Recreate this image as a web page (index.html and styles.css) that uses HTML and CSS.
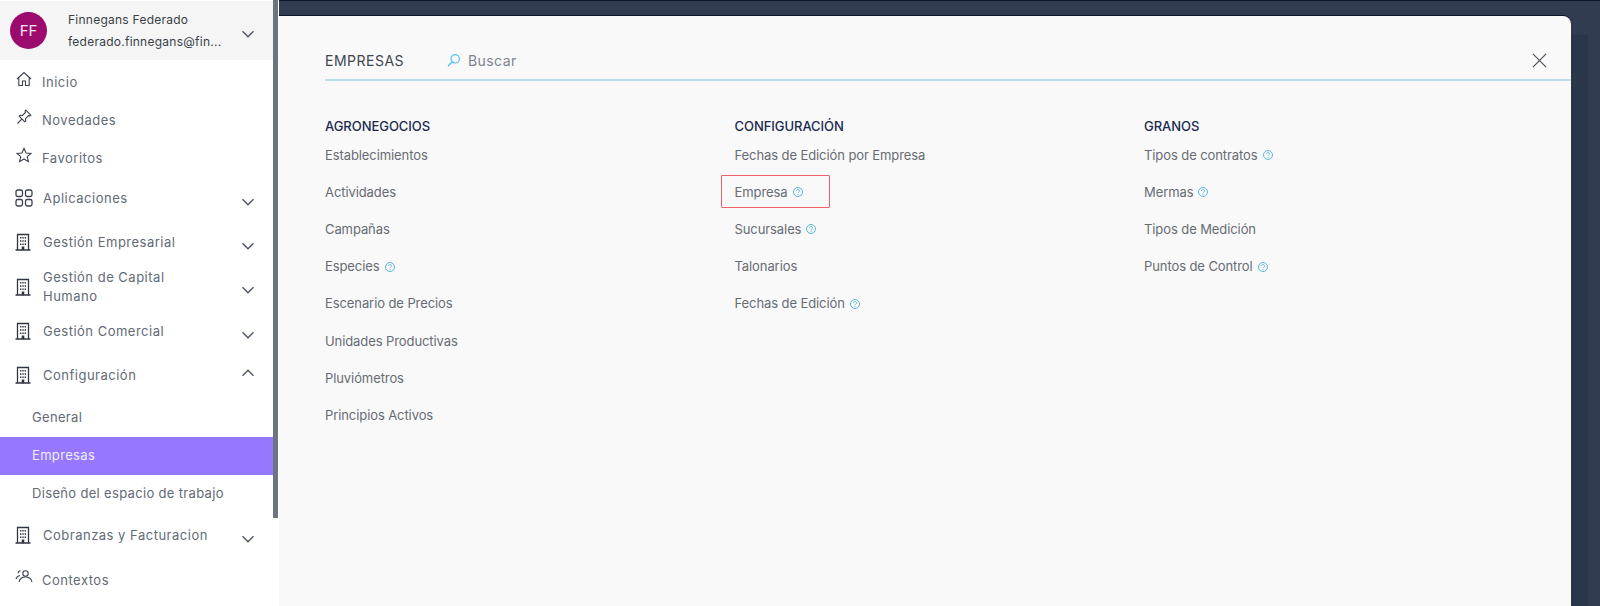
FILE: index.html
```html
<!DOCTYPE html>
<html lang="es">
<head>
<meta charset="utf-8">
<title>Empresas</title>
<link rel="stylesheet" href="styles.css">
</head>
<body>
<svg class="defs" width="0" height="0" aria-hidden="true">
  <symbol id="chev" viewBox="0 0 16 16"><path d="M2.5 5.2 8 10.8l5.5-5.6" fill="none" stroke="currentColor" stroke-width="1.3"/></symbol>
  <symbol id="building" viewBox="0 0 16 18"><path d="M2.500 17V1.500h11V17M.5 17h15" fill="none" stroke="currentColor" stroke-width="1.300"/><path d="M5 4h1.400v1.600H5zM7.300 4h1.400v1.600H7.300zM9.600 4H11v1.600H9.600zM5 7.200h1.400v1.600H5zM7.300 7.200h1.400v1.600H7.300zM9.600 7.200H11v1.600H9.600zM5 10.400h1.400V12H5zM7.300 10.400h1.400V12H7.300zM9.600 10.400H11V12H9.600zM6.700 13.500h2.600V17H6.700z" fill="currentColor"/></symbol>
  <symbol id="help" viewBox="0 0 12 12"><circle cx="6" cy="6" r="4.500" fill="none" stroke="currentColor" stroke-width="1"/><path d="M4.500 4.900A1.500 1.400 0 1 1 6.600 6.200c-.4.300-.6.500-.6 1" fill="none" stroke="currentColor" stroke-width=".9"/><circle cx="6" cy="8.600" r=".55" fill="currentColor"/></symbol>
</svg>

<aside class="sidebar">
  <div class="user">
    <div class="avatar">FF</div>
    <div class="user-text">
      <div class="user-line">Finnegans Federado</div>
      <div class="user-line">federado.finnegans@fin...</div>
    </div>
    <svg class="chev chev-low"><use href="#chev"/></svg>
  </div>
  <nav class="nav">
    <a class="row row-38"><svg class="ico" viewBox="0 0 16 16"><path d="M1 8 8 1.500 15 8M2.800 6.500V14.500h3.700V10h3V14.500h3.700V6.500" fill="none" stroke="currentColor" stroke-width="1.100"/></svg><span class="label">Inicio</span></a>
    <a class="row row-38"><svg class="ico" viewBox="0 0 16 16"><path d="M9.800 1.200 14.800 6.200 13.800 6.900 12.500 6.600 9.500 9.600 9.700 12 8.800 12.800 3.200 7.200 4 6.300 6.400 6.500 9.400 3.500 9.100 2.200zM5.800 10.200 1.500 14.500" fill="none" stroke="currentColor" stroke-width="1.100"/></svg><span class="label">Novedades</span></a>
    <a class="row row-38"><svg class="ico" viewBox="0 0 16 16"><path d="M8 1.300 10 6l5 .4-3.800 3.300 1.200 4.900L8 12l-4.400 2.600 1.200-4.900L1 6.400 6 6z" fill="none" stroke="currentColor" stroke-width="1.100"/></svg><span class="label">Favoritos</span></a>
    <a class="row row-app"><svg class="ico ico-grid" viewBox="0 0 18 18"><rect x="1" y="1" width="6.500" height="6.500" rx="1.800"/><rect x="10.500" y="1" width="6.500" height="6.500" rx="1.800"/><rect x="1" y="10.500" width="6.500" height="6.500" rx="1.800"/><rect x="10.500" y="10.500" width="6.500" height="6.500" rx="1.800"/></svg><span class="label label-app">Aplicaciones</span><svg class="chev chev-low"><use href="#chev"/></svg></a>
    <a class="row row-44"><svg class="bld"><use href="#building"/></svg><span class="label label-b">Gestión Empresarial</span><svg class="chev chev-low"><use href="#chev"/></svg></a>
    <a class="row row-45"><svg class="bld"><use href="#building"/></svg><span class="label label-b label-wrap">Gestión de Capital Humano</span><svg class="chev chev-mid"><use href="#chev"/></svg></a>
    <a class="row row-43"><svg class="bld"><use href="#building"/></svg><span class="label label-b">Gestión Comercial</span><svg class="chev chev-low"><use href="#chev"/></svg></a>
    <a class="row row-46"><svg class="bld"><use href="#building"/></svg><span class="label label-b">Configuración</span><svg class="chev chev-up"><use href="#chev"/></svg></a>
    <a class="sub"><span class="sub-text">General</span></a>
    <a class="sub sub-active"><span class="sub-text">Empresas</span></a>
    <a class="sub"><span class="sub-text">Diseño del espacio de trabajo</span></a>
    <a class="row row-45"><svg class="bld"><use href="#building"/></svg><span class="label label-b">Cobranzas y Facturacion</span><svg class="chev chev-low"><use href="#chev"/></svg></a>
    <a class="row row-44"><svg class="ico" viewBox="0 0 18 16"><circle cx="10.500" cy="4.500" r="2.700" fill="none" stroke="currentColor" stroke-width="1.100"/><path d="M4 13c.8-3.500 3.300-5 6.500-5s5.700 1.500 6.500 5M1 10c.6-2 2-3.200 4-3.500M5.500 1.800C4 2 3.200 3 3.200 4.200" fill="none" stroke="currentColor" stroke-width="1.100"/></svg><span class="label">Contextos</span></a>
  </nav>
  <div class="scrollbar"></div>
</aside>

<main class="stage">
  <section class="panel">
    <header class="panel-head">
      <h1 class="panel-title">EMPRESAS</h1>
      <svg class="search-ico" viewBox="0 0 14 14"><circle cx="8.200" cy="5.800" r="4.200" fill="none" stroke="currentColor" stroke-width="1.200"/><path d="M5 9 1 13" fill="none" stroke="currentColor" stroke-width="1.200"/></svg>
      <span class="search">Buscar</span>
      <svg class="close" viewBox="0 0 16 16"><path d="M1 1l14 14M15 1 1 15" fill="none" stroke="currentColor" stroke-width="1.200"/></svg>
    </header>
    <div class="cols">
      <div class="col">
        <h2 class="col-title">AGRONEGOCIOS</h2>
        <a class="item">Establecimientos</a>
        <a class="item">Actividades</a>
        <a class="item">Campañas</a>
        <a class="item">Especies<svg class="help"><use href="#help"/></svg></a>
        <a class="item">Escenario de Precios</a>
        <a class="item">Unidades Productivas</a>
        <a class="item">Pluviómetros</a>
        <a class="item">Principios Activos</a>
      </div>
      <div class="col">
        <h2 class="col-title">CONFIGURACIÓN</h2>
        <a class="item">Fechas de Edición por Empresa</a>
        <a class="item item-marked">Empresa<svg class="help help-marked"><use href="#help"/></svg><span class="marker"></span></a>
        <a class="item">Sucursales<svg class="help"><use href="#help"/></svg></a>
        <a class="item">Talonarios</a>
        <a class="item">Fechas de Edición<svg class="help"><use href="#help"/></svg></a>
      </div>
      <div class="col">
        <h2 class="col-title">GRANOS</h2>
        <a class="item">Tipos de contratos<svg class="help"><use href="#help"/></svg></a>
        <a class="item">Mermas<svg class="help"><use href="#help"/></svg></a>
        <a class="item">Tipos de Medición</a>
        <a class="item">Puntos de Control<svg class="help"><use href="#help"/></svg></a>
      </div>
    </div>
  </section>
  <div class="edge"></div>
</main>
</body>
</html>
```

FILE: styles.css
```css
* { box-sizing: border-box; }
html, body { margin: 0; height: 606px; overflow: hidden; }
body {
  display: flex;
  font-family: Inter, "Liberation Sans", sans-serif;
  font-size: 13px;
  color: #5c6470;
  background: #323c50;
}
.defs { position: absolute; }

.sidebar {
  position: relative;
  flex: 0 0 279px;
  height: 606px;
  background: #fff;
  padding-right: 5px;
  padding-top: 1px;
}
.scrollbar {
  position: absolute;
  top: 0;
  right: 1px;
  width: 5px;
  height: 518px;
  background: #6c7480;
}

.user {
  display: flex;
  align-items: center;
  height: 59px;
  background: #f5f5f5;
  padding-left: 10px;
  position: relative;
}
.avatar {
  flex: 0 0 37px;
  height: 37px;
  border-radius: 50%;
  background: #9c0a6e;
  color: #f3e6ef;
  font-size: 15px;
  display: flex;
  align-items: center;
  justify-content: center;
}
.user-text { margin-left: 21px; width: 162px; }
.user-line { font-size: 12px; line-height: 22px; color: #3a3f47; white-space: nowrap; letter-spacing: .25px; }
.chev { width: 16px; height: 16px; margin-left: auto; margin-right: 18px; color: #4a5260; flex: none; }
.chev-low { position: relative; top: 3px; }
.chev-mid { position: relative; top: 2px; }
.chev-up { transform: scaleY(-1); position: relative; top: -3px; }

.nav { display: flex; flex-direction: column; padding-top: 3px; }
.row { display: flex; align-items: center; padding-left: 15px; }
.row-38 { height: 38px; }
.row-app { height: 44px; }
.row-44 { height: 44px; }
.row-45 { height: 45px; }
.row-43 { height: 43px; }
.row-46 { height: 46px; }
.ico { width: 18px; height: 16px; color: #3a414e; flex: none; position: relative; top: -3px; }
.ico-grid { width: 18px; height: 18px; top: -1px; fill: none; stroke: currentColor; stroke-width: 1.300; }
.bld { width: 16px; height: 18px; color: #2f3540; flex: none; margin-left: 0; position: relative; top: -1px; }
.label { margin-left: 9px; font-size: 13px; color: #626a76; letter-spacing: .5px; }
.label-app { margin-left: 10px; position: relative; top: -1px; }
.label-b { margin-left: 12px; position: relative; top: -1px; }
.label-wrap { width: 150px; line-height: 18.500px; }

.sub {
  display: flex;
  align-items: center;
  height: 38px;
  padding-left: 32px;
  font-size: 13px;
  color: #626a76;
  letter-spacing: .33px;
}
.sub-text { position: relative; top: -1px; }
.sub-active { background: #9578ff; color: #f1edff; }

.stage { flex: 1; position: relative; border-top: 1px solid #0d1430; padding: 15px 29px 0 0; display: flex; }
.panel {
  flex: 1;
  height: 620px;
  background: #f9f9f9;
  border-radius: 0 8px 0 0;
  box-shadow: 0 -1px 0 #0d1430;
  padding: 0 0 0 46px;
}
.edge { position: absolute; left: 1292px; top: 34px; width: 17px; height: 580px; background: #2a364a; }
.panel-head {
  height: 65px;
  display: flex;
  align-items: center;
  padding-top: 25px;
  border-bottom: 2px solid #bcdcea;
  position: relative;
}
.panel-title { margin: 0; font-size: 14px; font-weight: 400; color: #40454d; letter-spacing: .5px; }
.search-ico { width: 14px; height: 14px; margin-left: 43px; color: #4cc4ee; }
.search { margin-left: 7px; font-size: 14px; color: #7d8490; letter-spacing: .4px; }
.close { width: 15px; height: 15px; margin-left: auto; margin-right: 24px; color: #4a4d52; }

.cols { display: flex; padding-top: 36px; }
.col { flex: 0 0 409.500px; display: flex; flex-direction: column; }
.col-title { margin: 0 0 9.500px; height: 19px; line-height: 19px; font-size: 13px; font-weight: 500; color: #1a2a50; letter-spacing: -.05px; }
.item {
  display: flex;
  align-items: center;
  height: 37.200px;
  line-height: 19px;
  font-size: 13px;
  color: #676c74;
  letter-spacing: -.09px;
  position: relative;
  align-self: flex-start;
  white-space: nowrap;
  margin-top: -9px;
  margin-bottom: 9px;
}
.help { width: 12px; height: 12px; margin-left: 4px; color: #5bb5d5; flex: none; }
.help-marked { margin-left: 5px; }
.marker {
  position: absolute;
  left: -14px;
  top: 1.500px;
  width: 109px;
  height: 33px;
  border: 1px solid #f0606a;
  border-radius: 1px;
}
```
